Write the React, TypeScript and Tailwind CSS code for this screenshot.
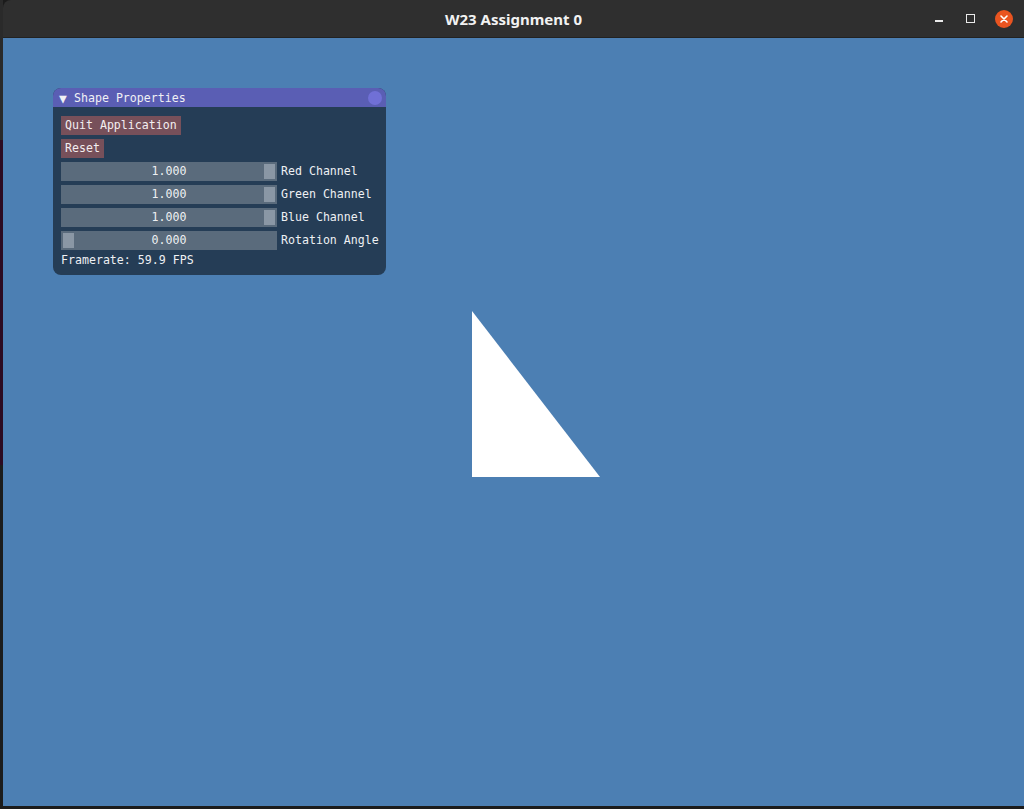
const mono = { fontFamily: '"DejaVu Sans Mono", "Liberation Mono", monospace' };

const Slider = ({ value, label, pos }: { value: string; label: string; pos: number }) => {
  return (
    <div className="flex items-center gap-[4px] h-[19px] whitespace-nowrap">
      <div className="relative w-[216px] h-[19px] bg-[#5a6b7c] flex items-center justify-center">
        <div
          className="absolute top-[2px] w-[11px] h-[15px] bg-[#8a97a5]"
          style={{ left: 2 + pos * (216 - 15) }}
        ></div>
        <span className="relative text-[#eef0f3]">{value}</span>
      </div>
      <span className="text-[#eef0f3]">{label}</span>
    </div>
  );
};

const App = () => {
  return (
    <div className="w-[1024px] h-[809px] flex bg-[#1b1b1b] overflow-hidden">
      {/* desktop peeking in on the left */}
      <div className="w-[3px] flex flex-col">
        <div className="h-[140px] bg-[#2a2a2a]"></div>
        <div className="h-[325px] bg-[#2c0b22]"></div>
        <div className="flex-1 bg-[#1c1c1c]"></div>
      </div>

      <div className="flex-1 flex flex-col">
        {/* title bar */}
        <div className="h-[38px] bg-[#2f2f2f] rounded-tl-[8px] flex items-center relative border-b border-[#222]">
          <div
            className="flex-1 text-center text-[15px] font-bold text-[#f2f2f2] pt-[2px]"
            style={{ fontFamily: '"Noto Sans", "Open Sans", sans-serif' }}
          >
            W23 Assignment 0
          </div>
          <div className="absolute right-0 top-0 h-[37px] flex items-center">
            <div className="w-[30px] flex justify-center">
              <div className="w-[8px] h-[2px] bg-[#eaeaea] mt-[5px]"></div>
            </div>
            <div className="w-[32px] flex justify-center">
              <div className="w-[9px] h-[9px] border-[1.5px] border-[#eaeaea]"></div>
            </div>
            <div className="w-[36px] flex justify-center mr-[2px]">
              <div className="w-[18px] h-[18px] rounded-full bg-[#e95420] flex items-center justify-center">
                <svg width="10" height="10" viewBox="0 0 10 10">
                  <path d="M2 2 L8 8 M8 2 L2 8" stroke="#ffffff" strokeWidth="1.6" strokeLinecap="round" />
                </svg>
              </div>
            </div>
          </div>
        </div>

        {/* GL viewport */}
        <div className="flex-1 relative bg-[#4c7fb3]">
          {/* ImGui window */}
          <div
            className="absolute left-[50px] top-[50px] w-[333px] rounded-[8px] bg-[#253d56] text-[11.6px] leading-[13px] overflow-hidden"
            style={mono}
          >
            <div className="h-[19px] bg-[#5a5eb4] flex items-center pl-[6px] pr-[4px] pt-[1px] text-[#f0f0f5]">
              <span className="text-[13px] w-[15px] leading-[13px]">▼</span>
              <span>Shape Properties</span>
              <div className="ml-auto w-[14px] h-[14px] rounded-full bg-[#7070d6]"></div>
            </div>
            <div className="px-[8px] pt-[9px] pb-[8px] flex flex-col gap-[4px] items-start">
              <div className="h-[19px] px-[4px] bg-[#77505a] text-[#f3eef0] flex items-center">Quit Application</div>
              <div className="h-[19px] px-[4px] bg-[#77505a] text-[#f3eef0] flex items-center">Reset</div>
              <Slider value="1.000" label="Red Channel" pos={1} />
              <Slider value="1.000" label="Green Channel" pos={1} />
              <Slider value="1.000" label="Blue Channel" pos={1} />
              <Slider value="0.000" label="Rotation Angle" pos={0} />
              <div className="text-[#eef0f3] h-[13px]">Framerate: 59.9 FPS</div>
            </div>
          </div>

          {/* the shape */}
          <svg className="absolute left-[469px] top-[273px]" width="129" height="167" viewBox="0 0 129 167">
            <polygon points="0,0 0,166 128,166" fill="#ffffff" />
          </svg>
        </div>

        <div className="h-[3px] bg-[#1c1c1c]"></div>
      </div>
    </div>
  );
};

export default App;
